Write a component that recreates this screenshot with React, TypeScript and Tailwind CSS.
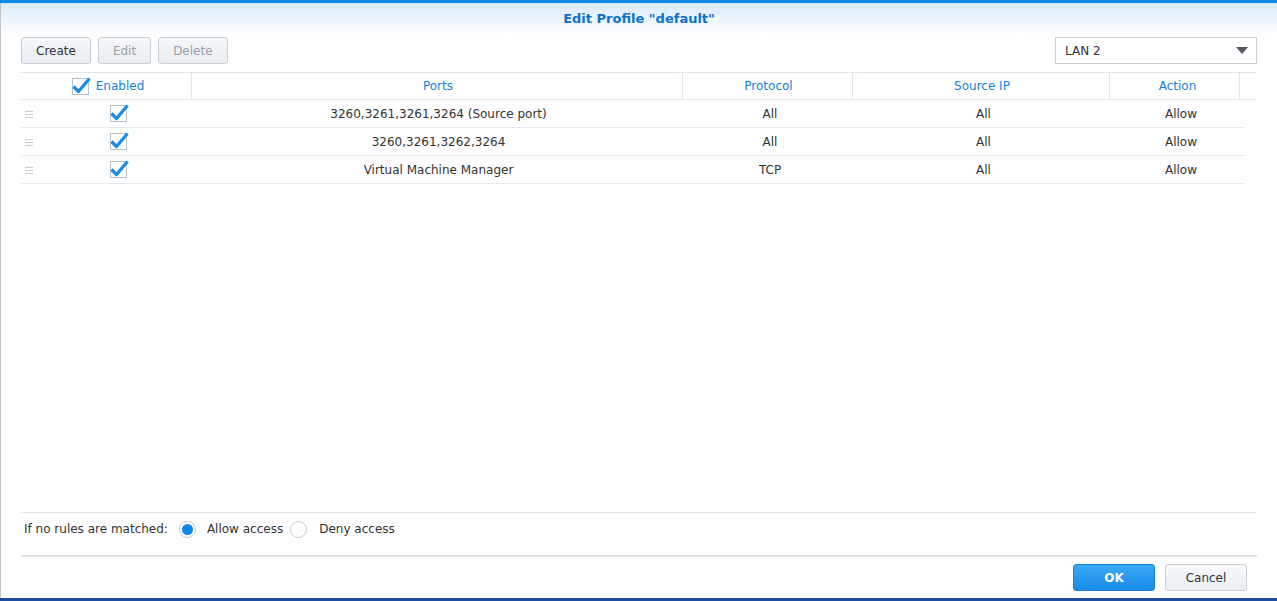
import React from "react";

type Rule = { ports: string; protocol: string; source: string; action: string };

const rules: Rule[] = [
  { ports: "3260,3261,3261,3264 (Source port)", protocol: "All", source: "All", action: "Allow" },
  { ports: "3260,3261,3262,3264", protocol: "All", source: "All", action: "Allow" },
  { ports: "Virtual Machine Manager", protocol: "TCP", source: "All", action: "Allow" },
];

const cols = "grid grid-cols-[171px_491px_170px_257px_130px_1fr]";

function Check() {
  return (
    <span className="relative inline-block h-[17px] w-[17px] border border-[#b9c1ca] bg-white">
      <svg viewBox="0 0 20 20" className="absolute -right-[3px] -top-[4px] h-[20px] w-[20px]">
        <path d="M2.5 11.5 L7.5 16.5 L18.5 3.5" fill="none" stroke="#1a8ce8" strokeWidth="3.2" strokeLinejoin="round" />
      </svg>
    </span>
  );
}

function Radio({ on }: { on?: boolean }) {
  return (
    <span className="flex h-[17px] w-[17px] items-center justify-center rounded-full border border-[#c3cad2] bg-white">
      {on && <span className="h-[11px] w-[11px] rounded-full bg-[#0e86ea]" />}
    </span>
  );
}

function ToolButton({ label, disabled }: { label: string; disabled?: boolean }) {
  return (
    <button
      className={`h-[27px] rounded-[3px] border border-[#c9d0d8] bg-gradient-to-b from-[#f6f8fa] to-[#e9edf1] px-[14px] text-[12px] ${
        disabled ? "text-[#9aa0a6]" : "text-[#333]"
      }`}
    >
      {label}
    </button>
  );
}

export default function App() {
  return (
    <div className="flex h-[601px] w-[1277px] flex-col overflow-hidden bg-white font-['DejaVu_Sans',Verdana,sans-serif] text-[11px] text-[#333]">
      <div className="h-[3px] shrink-0 bg-[#0588e6]" />
      <div className="flex flex-1 flex-col border-l border-[#c6c6c6]">
        <div className="flex h-[33px] items-center justify-center bg-gradient-to-b from-[#d8ebfa] to-white">
          <h1 className="pb-[2px] text-[13px] font-bold text-[#0b72c9]">Edit Profile "default"</h1>
        </div>

        <div className="flex flex-1 flex-col px-[20px]">
          <div className="mt-[1px] flex h-[27px] items-center gap-[7px]">
            <ToolButton label="Create" />
            <ToolButton label="Edit" disabled />
            <ToolButton label="Delete" disabled />
            <div className="ml-auto flex h-[27px] w-[202px] items-center justify-between border border-[#c8d0d8] bg-white pl-[9px] pr-[8px] text-[12px]">
              <span>LAN 2</span>
              <svg viewBox="0 0 12 7" className="h-[7px] w-[12px]">
                <path d="M0 0 H12 L6 7 Z" fill="#555b63" />
              </svg>
            </div>
          </div>

          <div className={`${cols} mt-[8px] h-[28px] border-y border-[#dfe6ee] text-[12px] text-[#1781e0]`}>
            <div className="flex items-center justify-center gap-[7px] border-r border-[#dfe6ee] pl-[4px]">
              <Check />
              <span>Enabled</span>
            </div>
            <div className="flex items-center justify-center border-r border-[#dfe6ee] pl-[2px]">Ports</div>
            <div className="flex items-center justify-center border-r border-[#dfe6ee] pl-[2px]">Protocol</div>
            <div className="flex items-center justify-center border-r border-[#dfe6ee] pl-[2px]">Source IP</div>
            <div className="flex items-center justify-center border-r border-[#dfe6ee] pl-[6px]">Action</div>
            <div />
          </div>

          <div className="w-[1224px]">
            {rules.map((r, i) => (
              <div key={i} className={`${cols} h-[28px] border-b border-[#e6eaef] text-[12px]`}>
                <div className="relative flex items-center justify-center pl-[24px]">
                  <span className="absolute left-[4px] top-[11px] flex flex-col gap-[2px]">
                    <span className="h-px w-[8px] bg-[#c9cdd2]" />
                    <span className="h-px w-[8px] bg-[#c9cdd2]" />
                    <span className="h-px w-[8px] bg-[#c9cdd2]" />
                  </span>
                  <Check />
                </div>
                <div className="flex items-center justify-center pl-[2px]">{r.ports}</div>
                <div className="flex items-center justify-center pl-[4px]">{r.protocol}</div>
                <div className="flex items-center justify-center pl-[4px]">{r.source}</div>
                <div className="flex items-center justify-center pl-[12px]">{r.action}</div>
                <div />
              </div>
            ))}
          </div>

          <div className="mt-auto flex h-[43px] items-center border-t border-[#e3e8ee] pb-[10px] pl-[3px] text-[12px]">
            <span className="mr-[11px]">If no rules are matched:</span>
            <Radio on />
            <span className="ml-[11px] mr-[7px]">Allow access</span>
            <Radio />
            <span className="ml-[12px]">Deny access</span>
          </div>
          <div className="h-[2px] border-t border-[#d6dbe1] bg-[#eef1f4]" />

          <div className="flex h-[41px] items-center justify-end gap-[10px] pr-[10px]">
            <button className="h-[27px] w-[82px] rounded-[3px] border border-[#1b86dc] bg-gradient-to-b from-[#39a9f6] to-[#168ae6] text-[12px] font-bold text-white">
              OK
            </button>
            <button className="h-[27px] w-[82px] rounded-[3px] border border-[#c7ced6] bg-gradient-to-b from-[#f7f9fb] to-[#ebeff3] text-[12px] text-[#333]">
              Cancel
            </button>
          </div>
        </div>
      </div>
      <div className="h-[3px] shrink-0 bg-[#1c4c9e]" />
    </div>
  );
}
